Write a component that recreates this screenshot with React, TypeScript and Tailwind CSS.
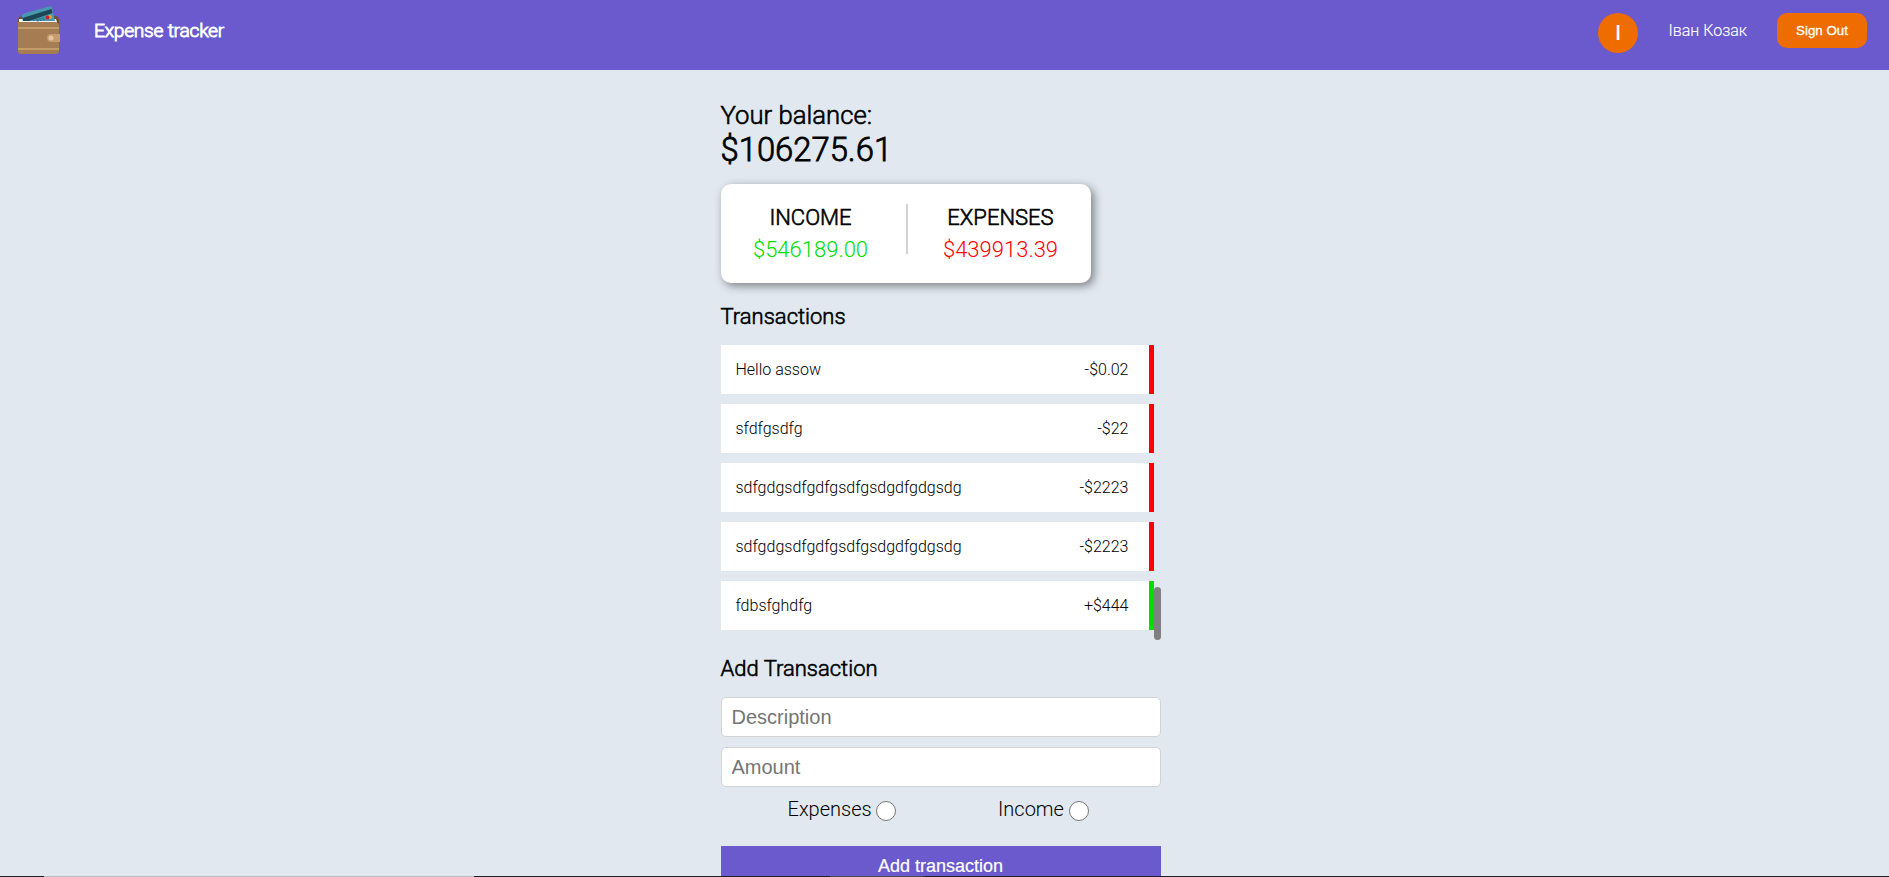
import React from "react";

type Transaction = { text: string; amount: string; income?: boolean };

const transactions: Transaction[] = [
  { text: "Hello assow", amount: "-$0.02" },
  { text: "sfdfgsdfg", amount: "-$22" },
  { text: "sdfgdgsdfgdfgsdfgsdgdfgdgsdg", amount: "-$2223" },
  { text: "sdfgdgsdfgdfgsdfgsdgdfgdgsdg", amount: "-$2223" },
  { text: "fdbsfghdfg", amount: "+$444", income: true },
];

function WalletLogo() {
  return (
    <svg width="44" height="50" viewBox="0 0 44 50" className="block">
      <path d="M1 14q0-3 4-4h34q3 1 3 4v10H1z" fill="#734c29" />
      <path d="M2 13h37l1 3v4H2z" fill="#f2f2f2" />
      <path d="M5 10.500q-1-2 2-3L32 0.500q2-1 3 1l3 13.500H6z" fill="#4799af" />
      <path d="M5.500 12 34.500 3l1 4L12 15H6z" fill="#1d4553" />
      <path d="M16 14.500l12-3M20 15l8-1.500" stroke="#28687a" strokeWidth="1" strokeDasharray="2 1" />
      <circle cx="33" cy="11" r="2" fill="#e8a63c" />
      <circle cx="30.500" cy="11.500" r="2" fill="#c8232c" />
      <path d="M1 16h38q3 1 3 3v26q0 3-3 3H4q-3 0-3-3z" fill="#a67c52" />
      <path d="M1 21h41v2H1zM1 42h41v2H1z" fill="#c69c6d" />
      <path d="M34 28h9v8h-9q-4 0-4-4t4-4z" fill="#c69c6d" />
      <circle cx="34" cy="32" r="2.500" fill="#e6c3a0" />
    </svg>
  );
}

function Header() {
  return (
    <header className="flex h-[70px] items-start bg-[#6a5acd] text-white">
      <div className="ml-[17px] mt-[6px]">
        <WalletLogo />
      </div>
      <h1 className="ml-[33px] mt-[16px] w-[160px] text-[19.2px] leading-[30px] font-light tracking-[-0.25px] [-webkit-text-stroke:0.9px_currentColor]">Expense tracker</h1>
      <div className="mr-[22px] ml-auto flex items-start">
        <div className="mt-[13px] flex size-10 items-center justify-center rounded-full bg-[#ef6c00] text-[20px] font-medium">І</div>
        <span className="mt-[19px] ml-[30.5px] w-[78.5px] text-[16px] leading-6 font-light whitespace-nowrap [-webkit-text-stroke:0.15px_currentColor]">Іван Козак</span>
        <button className="mt-[13px] ml-[30px] h-[35px] w-[90px] rounded-[10px] bg-[#ef6c00] font-['Liberation_Sans',sans-serif] text-[13.333px] [-webkit-text-stroke:0.3px_currentColor]">Sign Out</button>
      </div>
    </header>
  );
}

export default function App() {
  return (
    <div className="flex h-[877px] flex-col overflow-hidden bg-[#e1e8f0] font-['Roboto',sans-serif] text-black">
      <Header />
      <main className="ml-[700.5px] flex h-[806px] w-[480px] flex-col overflow-hidden px-5 pt-[30px]">
        <h2 className="text-[25.7px] leading-[31px] font-light [-webkit-text-stroke:0.6px_currentColor]">Your balance:</h2>
        <p className="text-[32.8px] leading-[38px] font-light [-webkit-text-stroke:0.8px_currentColor]">$106275.61</p>
        <section className="mt-[15px] flex h-[99px] w-[370px] shrink-0 rounded-[10px] bg-white pt-5 text-center shadow-[3px_3px_10px_rgba(0,0,0,0.45)]">
          <div className="w-[185px] pr-[5px]">
            <h3 className="text-[22px] leading-[28px] font-light [-webkit-text-stroke:0.6px_currentColor]">INCOME</h3>
            <p className="mt-1 text-[22px] leading-[28px] font-light text-[#00dd00]">$546189.00</p>
          </div>
          <div className="h-[50px] w-[2px] bg-[#d3d3d3]" />
          <div className="flex-1 pl-[3px]">
            <h3 className="text-[22px] leading-[28px] font-light [-webkit-text-stroke:0.6px_currentColor]">EXPENSES</h3>
            <p className="mt-1 text-[22px] leading-[28px] font-light text-[#ff0000]">$439913.39</p>
          </div>
        </section>
        <h2 className="mt-[19px] text-[22px] leading-[30px] font-light [-webkit-text-stroke:0.6px_currentColor]">Transactions</h2>
        <div className="mt-[13px] flex h-[295px] shrink-0">
          <ul className="flex w-[433px] flex-col gap-[10px]">
            {transactions.map((t, i) => (
              <li
                key={i}
                className={`flex h-[49px] items-center justify-between border-r-[5px] bg-white pr-5 pl-[15px] text-[16px] font-light ${t.income ? "border-[#00dd00]" : "border-[#ff0000]"}`}
              >
                <span>{t.text}</span>
                <span>{t.amount}</span>
              </li>
            ))}
          </ul>
          <div className="mt-[242px] h-[53px] w-[7px] rounded-[4px] bg-[#808080]" />
        </div>
        <h2 className="mt-[14px] text-[22px] leading-[30px] font-light [-webkit-text-stroke:0.6px_currentColor]">Add Transaction</h2>
        <input placeholder="Description" className="mt-[13px] h-10 w-full shrink-0 rounded-[5px] border border-[#d3d3d3] bg-white px-[10px] font-['Liberation_Sans',sans-serif] text-[20px] placeholder:text-[#757575]" />
        <input placeholder="Amount" className="mt-[10px] h-10 w-full shrink-0 rounded-[5px] border border-[#d3d3d3] bg-white px-[10px] font-['Liberation_Sans',sans-serif] text-[20px] placeholder:text-[#757575]" />
        <div className="mt-[9px] flex h-[31px] shrink-0 text-[20px] leading-[26px] font-light">
          <label className="ml-[67px] flex w-[210.5px] items-start">
            <span className="w-[88px]">Expenses</span>
            <input type="radio" name="kind" className="mt-[5px] size-5 appearance-none rounded-full border border-[#767676] bg-white" />
          </label>
          <label className="flex items-start">
            <span className="w-[70.5px]">Income</span>
            <input type="radio" name="kind" className="mt-[5px] size-5 appearance-none rounded-full border border-[#767676] bg-white" />
          </label>
        </div>
        <button className="mt-[19px] h-10 w-full shrink-0 bg-[#6a5acd] font-['Liberation_Sans',sans-serif] text-[18px] text-white [-webkit-text-stroke:0.2px_currentColor]">Add transaction</button>
      </main>
      <div className="flex h-px shrink-0 bg-[#1e1f29]">
        <div className="ml-[44px] w-[430px] bg-[#bdbdbd]" />
        <div className="ml-[356px] w-[94px] bg-[#4a4a55]" />
      </div>
    </div>
  );
}
